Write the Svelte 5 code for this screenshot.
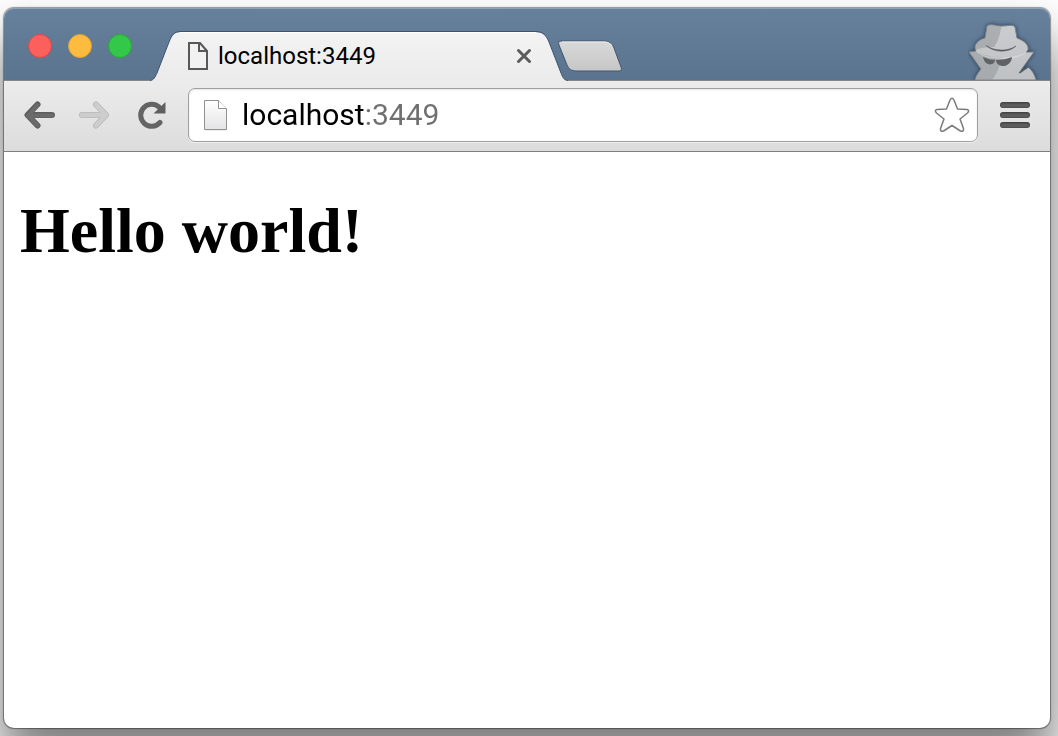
<script>
  let address = $state('localhost:3449');
</script>

<div class="desktop">
  <div class="window">
    <header class="titlebar">
      <div class="lights">
        <button class="light red" aria-label="Close window"></button>
        <button class="light yellow" aria-label="Minimize window"></button>
        <button class="light green" aria-label="Zoom window"></button>
      </div>
      <div class="tab">
        <svg class="shape" viewBox="0 0 418 50" aria-hidden="true">
          <defs>
            <linearGradient id="tabfill" x1="0" y1="0" x2="0" y2="1">
              <stop offset="0" stop-color="#f3f3f3" />
              <stop offset="1" stop-color="#ebebeb" />
            </linearGradient>
          </defs>
          <path d="M0 50 C4 49 5 46 7 42 L19 11 C22 4 24 1 31 1 H385 C393 1 396 4 399 11 L411 42 C413 47 414 49 418 50Z" fill="url(#tabfill)" />
          <path d="M0 49.500 C4 49 5 46 7 42 L19 11 C22 4 24 .5 31 .5 H385 C393 .5 396 4 399 11 L411 42 C413 47 414 49 418 49.500" fill="none" stroke="#3e536b" />
          <path d="M30 1.500H386" stroke="#fff" />
        </svg>
        <svg class="page" width="20" height="28" viewBox="0 0 20 28" aria-hidden="true">
          <path d="M1 1H12L19 9V27H1Z" fill="#f1f1f1" stroke="#585858" stroke-width="2" />
          <path d="M11 1V9H19" fill="none" stroke="#585858" stroke-width="2" />
        </svg>
        <span class="title">localhost:3449</span>
        <button class="icon" aria-label="Close tab">
          <svg width="16" height="16" viewBox="0 0 16 16"><path d="M2.500 2.500L13.500 13.500M13.500 2.500L2.500 13.500" stroke="#5b5b5b" stroke-width="3" stroke-linecap="round" /></svg>
        </button>
      </div>
      <button class="icon newtab" aria-label="New tab">
        <svg width="64" height="32" viewBox="0 0 64 32">
          <defs>
            <linearGradient id="newfill" x1="0" y1="0" x2="0" y2="1">
              <stop offset="0" stop-color="#d9d9d9" />
              <stop offset="1" stop-color="#c6c6c6" />
            </linearGradient>
          </defs>
          <path d="M4 1H46C51 1 54 3 56 8L63 27C64 30 63 31 60 31H19C13 31 11 29 9 25L1 5C0 2 1 1 4 1Z" fill="url(#newfill)" stroke="#40566e" />
          <path d="M4 2H46C50 2 52 3 54 6" fill="none" stroke="#eaeaea" />
        </svg>
      </button>
      <svg class="agent" width="72" height="60" viewBox="0 0 72 60" role="img" aria-label="Incognito">
        <defs>
          <linearGradient id="coat" x1="0" y1="0" x2="0" y2="1">
            <stop offset="0" stop-color="#cbccce" />
            <stop offset="1" stop-color="#bfc2c5" />
          </linearGradient>
          <clipPath id="silhouette"><path d="M19 6C23 3 28 6 34 6C40 6 44 4 47 7L49 18C57 21 61 25 60 30L58 32L66 32L51 53L60 47C64 50 67 55 68 60H7C8 55 11 52 13 49L1 32L8 31C5 26 9 20 17 18Z" /></clipPath>
        </defs>
        <g class="shade">
          <path d="M19 6C23 3 28 6 34 6C40 6 44 4 47 7L49 18C57 21 61 25 60 30L58 32L66 32L51 53L60 47C64 50 67 55 68 60H7C8 55 11 52 13 49L1 32L8 31C5 26 9 20 17 18Z" fill="url(#coat)" stroke="#777f87" />
        </g>
        <g clip-path="url(#silhouette)">
          <path d="M0 0H34C33 12 31 20 26 27C18 27 9 28 7 31C16 36 26 37 36 38C30 45 32 50 24 60H0Z" fill="#8d9296" opacity=".5" />
          <path d="M7 30C16 40 50 40 60 30C56 37 44 39 34 39C24 39 12 37 7 30Z" fill="#dcdee0" opacity=".6" />
        </g>
        <path d="M18 25.500C27 31.500 40 31.500 48 26C41 33 26 33 18 25.500Z" fill="#56595c" stroke="#56595c" stroke-width=".5" />
        <path d="M15 37C20 39 23 40 27 39.500C27 46 17 47 15 37ZM28 40C34 40 39 39 44 37C43 49 28 48 28 40Z" fill="#606366" />
        <path d="M51.500 53L60 47" stroke="#555b60" stroke-width="1.500" />
      </svg>
    </header>

    <form class="toolbar" onsubmit={(e) => e.preventDefault()}>
      <button type="button" class="icon" aria-label="Back">
        <svg width="32" height="28" viewBox="0 0 32 28"><path d="M28 14H5M13.500 3.500L3.500 14L13.500 24.500" fill="none" stroke="#5d5d5d" stroke-width="6" stroke-linecap="round" stroke-linejoin="round" /><path d="M28 14.500H5M13.500 4L4 14.500L13.500 24.500" fill="none" stroke="#6b6b6b" stroke-width="4" stroke-linecap="round" stroke-linejoin="round" /></svg>
      </button>
      <button type="button" class="icon forward" aria-label="Forward">
        <svg width="32" height="28" viewBox="0 0 32 28"><path d="M4 14H27M18 3.500L28 14L18 24.500" fill="none" stroke="#b8b8b8" stroke-width="6" stroke-linecap="round" stroke-linejoin="round" /><path d="M4 14H27M18 3.500L28 14L18 24.500" fill="none" stroke="#cdcdcd" stroke-width="4.500" stroke-linecap="round" stroke-linejoin="round" /></svg>
      </button>
      <button type="button" class="icon reload" aria-label="Reload">
        <svg width="28" height="28" viewBox="0 0 28 28"><path d="M22 21.500A11 11 0 1 1 21 6" fill="none" stroke="#646464" stroke-width="5" stroke-linecap="round" /><path d="M27.500 1V12.500H15.500Z" fill="#606060" /></svg>
      </button>
      <div class="omnibox">
        <svg width="24" height="32" viewBox="0 0 24 32" aria-hidden="true">
          <defs>
            <linearGradient id="sheet" x1="0" y1="0" x2="0" y2="1">
              <stop offset="0" stop-color="#fff" />
              <stop offset="1" stop-color="#e4e4e6" />
            </linearGradient>
          </defs>
          <path d="M1 31.500H23" stroke="#ededed" />
          <path d="M.5 1.500H14.500L22.500 10V30.500H.5Z" fill="url(#sheet)" stroke="#919191" />
          <path d="M14.500 1.500V9.500H22.500" fill="#fff" stroke="#919191" />
        </svg>
        <input class="address" type="text" aria-label="Address" spellcheck="false" bind:value={address} />
        <button type="button" class="icon" aria-label="Bookmark this page">
          <svg width="36" height="36" viewBox="0 0 36 36"><path d="M16 3Q18 -.5 20 3L23.500 12L33 12.500Q36 13.500 33.500 16L26 22L29.500 31.500Q30 35 26.500 34L18 28.500L9.500 34Q6 35 6.500 31.500L10 22L2.500 16Q0 13.500 3 12.500L12.500 12Z" fill="#fff" stroke="#7b7b7b" stroke-width="1.500" stroke-linejoin="round" /></svg>
        </button>
      </div>
      <button type="button" class="icon" aria-label="Menu">
        <svg width="30" height="26" viewBox="0 0 30 26"><path d="M3 3H27M3 13H27M3 23H27" stroke="#444" stroke-width="6" stroke-linecap="round" /><path d="M3 3.500H27M3 13.500H27M3 23.500H27" stroke="#5c5c5c" stroke-width="4" stroke-linecap="round" /></svg>
      </button>
    </form>

    <main>
      <h1>Hello world!</h1>
    </main>
  </div>
</div>

<style>
  :global(body) {
    margin: 0;
    background: #fff;
  }
  .desktop {
    box-sizing: border-box;
    min-height: 100vh;
    padding: 8px 8px 8px 4px;
    display: flex;
    overflow: hidden;
  }
  .window {
    flex: 1;
    min-width: 0;
    display: flex;
    flex-direction: column;
    border-radius: 10px;
    background: #fff;
    box-shadow:
      0 0 1px 1px rgba(0, 0, 0, 0.4),
      0 34px 50px 4px rgba(0, 0, 0, 0.5);
  }
  button {
    margin: 0;
    padding: 0;
    border: 0;
    background: none;
  }
  svg {
    display: block;
  }
  .icon {
    flex: none;
  }
  .titlebar {
    box-sizing: border-box;
    height: 73px;
    display: flex;
    align-items: flex-end;
    padding: 0 10px 0 24px;
    border-radius: 10px 10px 0 0;
    border-bottom: 1px solid #84868a;
    background: linear-gradient(#67819d, #5a7490);
    box-shadow: inset 0 1px #8fa3b8;
  }
  .lights {
    display: flex;
    gap: 16px;
    padding-bottom: 22px;
  }
  .light {
    box-sizing: border-box;
    width: 24px;
    height: 24px;
    border-radius: 50%;
    border: 1px solid #df4744;
    background: #fc605c;
  }
  .yellow {
    border-color: #de9f34;
    background: #fdbc40;
  }
  .green {
    border-color: #27aa35;
    background: #34c84a;
  }
  .tab {
    box-sizing: border-box;
    position: relative;
    flex: 0 1 418px;
    height: 50px;
    margin: 0 0 -1px 18px;
    padding: 0 36px 0 38px;
    display: flex;
    align-items: center;
    gap: 10px;
  }
  .shape {
    position: absolute;
    inset: 0;
    width: 100%;
    height: 100%;
  }
  .tab > :not(.shape) {
    position: relative;
  }
  .title {
    flex: 1;
    font: 24px/32px Roboto, sans-serif;
    color: #000;
  }
  .newtab {
    margin: 0 auto 8px -10px;
    position: relative;
  }
  .agent {
    flex: none;
  }
  .shade {
    filter: drop-shadow(0 0 2px rgba(30, 45, 65, 0.8));
  }
  .toolbar {
    box-sizing: border-box;
    height: 71px;
    display: flex;
    align-items: center;
    padding: 0 20px 2px;
    border-bottom: 1px solid #808080;
    background: linear-gradient(#ececec, #dcdcdc);
  }
  .forward {
    margin-left: 22px;
  }
  .reload {
    margin: 0 22px 0 28px;
  }
  .omnibox {
    box-sizing: border-box;
    flex: 1;
    min-width: 0;
    height: 54px;
    margin-right: 22px;
    padding: 0 7px 0 15px;
    display: flex;
    align-items: center;
    gap: 14px;
    border: 1px solid #a0a0a0;
    border-radius: 7px;
    background: #fff;
    box-shadow: inset 0 1px 2px #e4e4e4, 0 1px #f0f0f0;
  }
  .address {
    flex: 1;
    min-width: 0;
    padding: 0;
    border: 0;
    outline: 0;
    font: 30px/40px Roboto, sans-serif;
    color: transparent;
    caret-color: #000;
    background: linear-gradient(90deg, #000 122px, #6f6f6f 122px);
    background-clip: text;
    -webkit-background-clip: text;
  }
  main {
    flex: 1;
    padding: 0 16px;
  }
  h1 {
    margin: 42px 0;
    font: bold 64px/74px "Liberation Serif", serif;
    color: #000;
  }
</style>
